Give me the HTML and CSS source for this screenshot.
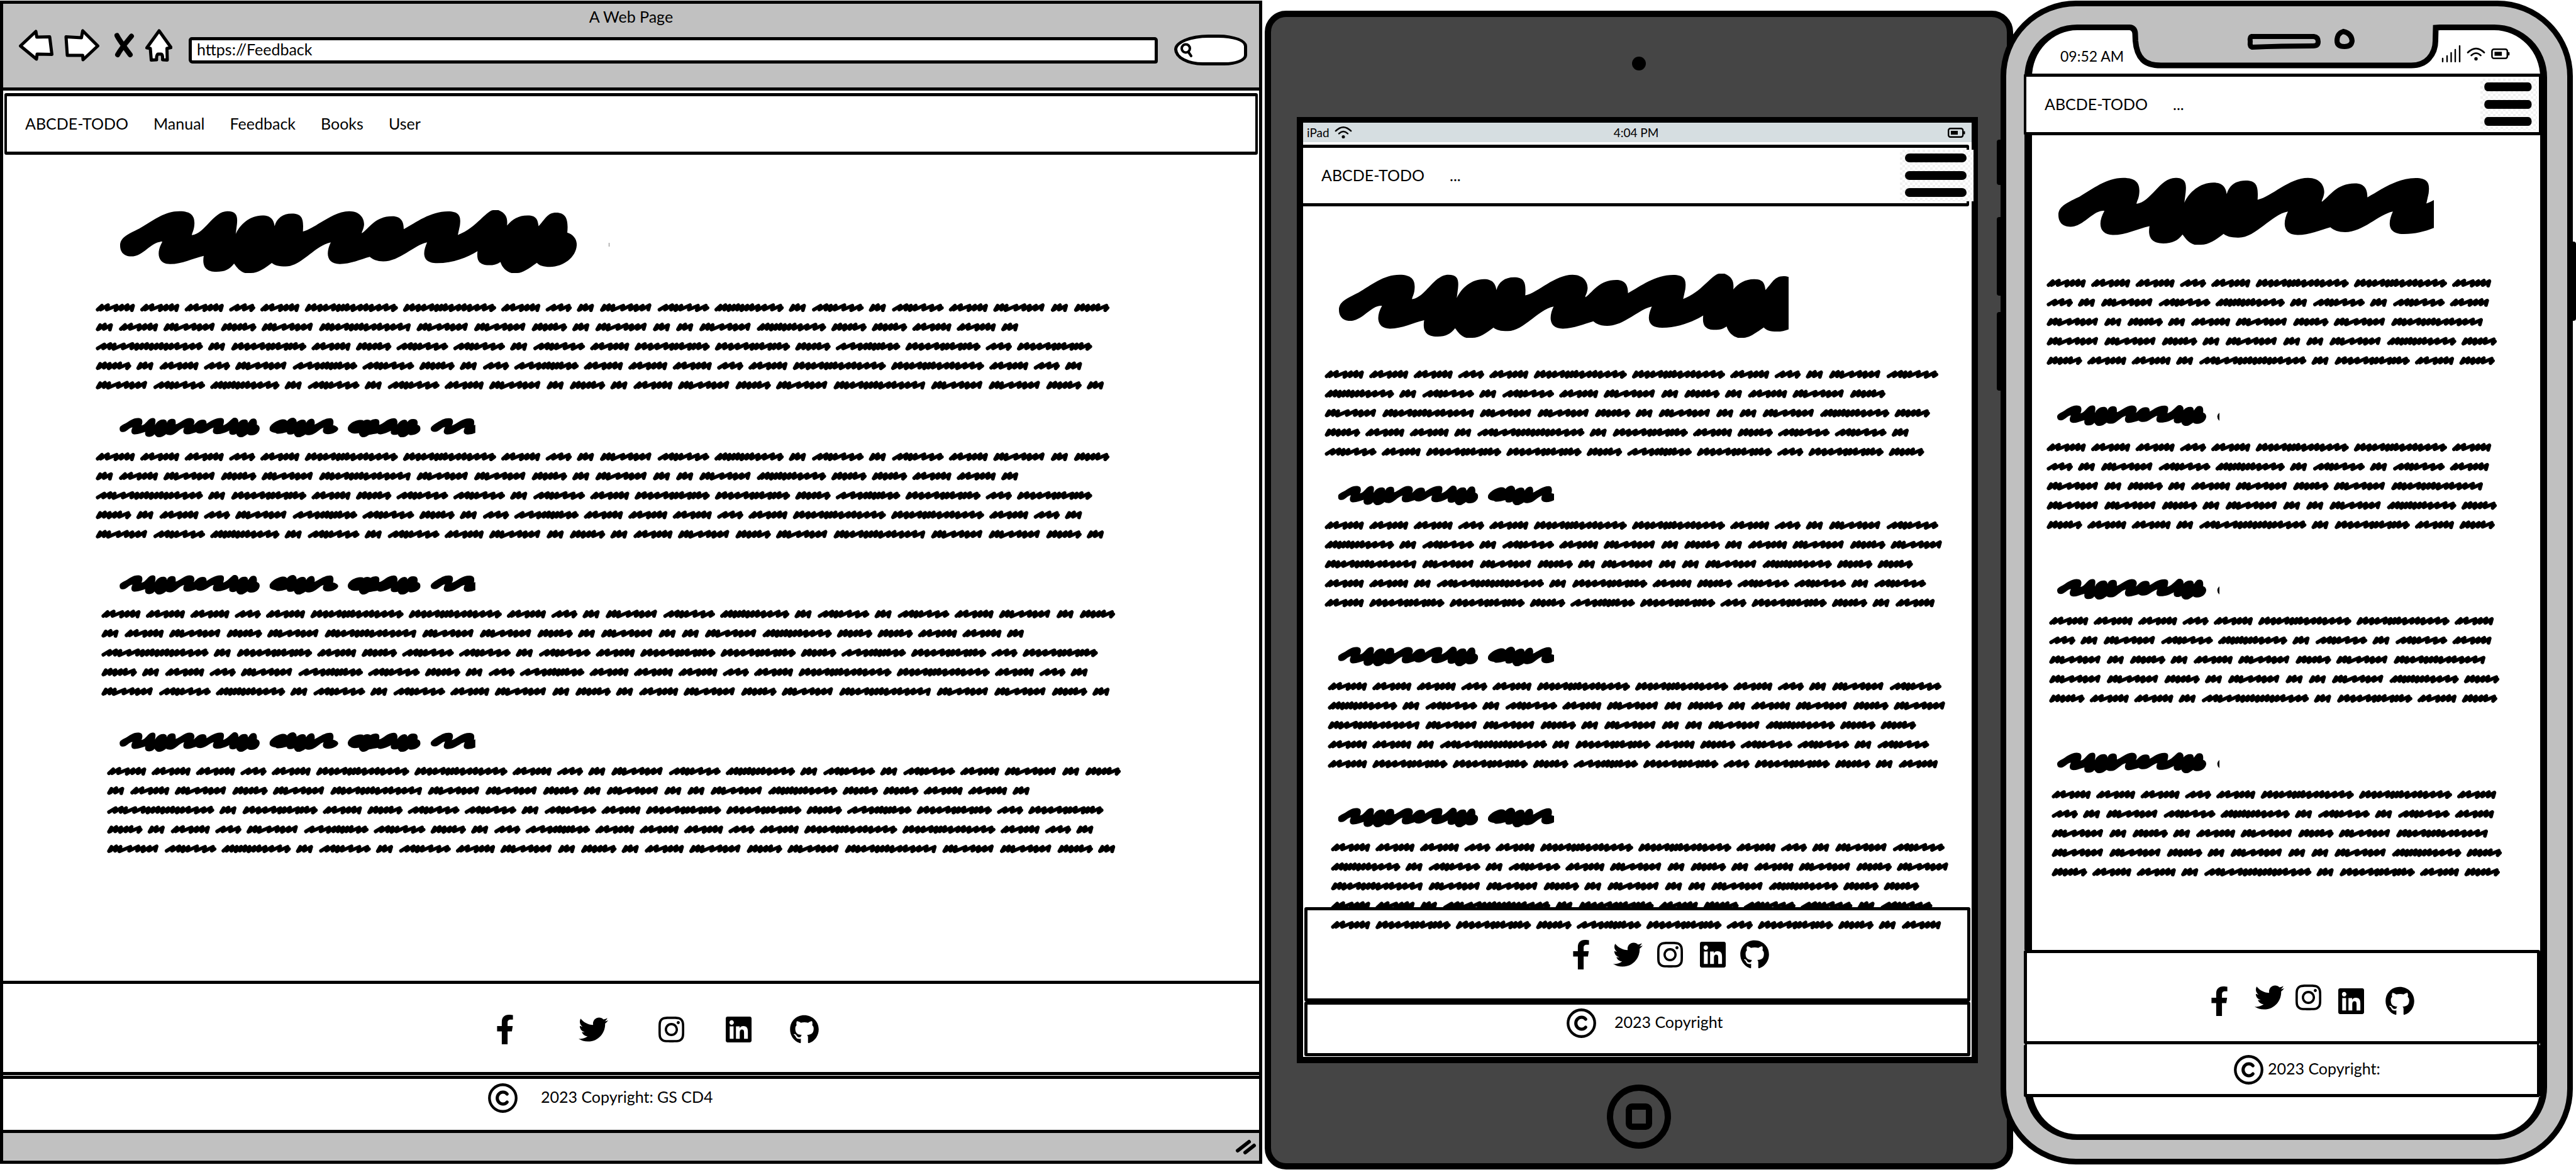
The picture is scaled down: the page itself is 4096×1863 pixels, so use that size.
FILE: index.html
```html
<!DOCTYPE html>
<html lang="en">
<head>
<meta charset="utf-8">
<title>Feedback wireframes</title>
<meta name="viewport" content="width=device-width, initial-scale=1">
<link rel="stylesheet" href="styles.css">
</head>
<body>
<svg class="defs" aria-hidden="true">
  <symbol id="big-word" viewBox="293 1030 1114 307" preserveAspectRatio="none">
    <path d="M293 1203C293 1165 310 1150 340 1120C370 1085 400 1035 438 1035C470 1035 476 1065 474 1105C473 1130 468 1142 468 1152C500 1145 520 1035 555 1035C578 1035 580 1060 578 1100L575 1147C585 1100 610 1056 640 1056C662 1056 668 1080 670 1108C675 1070 690 1047 712 1047C738 1047 741 1075 739 1134C770 1120 810 1035 852 1035C880 1035 890 1075 888 1105C886 1130 882 1135 883 1143C900 1120 915 1060 957 1060C980 1060 985 1090 985 1123C1015 1090 1050 1036 1093 1036C1125 1036 1124 1070 1122 1105L1117 1151C1160 1120 1185 1035 1203 1030L1216 1030C1235 1045 1239 1070 1237 1105C1250 1075 1265 1056 1287 1056C1310 1056 1312 1080 1314 1108C1330 1075 1335 1042 1357 1042C1382 1042 1387 1080 1384 1140C1400 1150 1408 1175 1407 1203C1405 1260 1375 1307 1342 1307C1325 1307 1315 1300 1310 1287C1290 1315 1275 1337 1262 1337L1248 1337C1235 1330 1225 1310 1221 1283C1212 1295 1205 1299 1193 1299C1165 1299 1163 1265 1165 1230C1140 1260 1105 1289 1067 1289C1030 1289 1030 1240 1042 1187C1010 1200 975 1280 935 1280C920 1280 910 1272 902 1258C880 1270 855 1293 829 1293C795 1293 795 1235 807 1187C770 1200 735 1305 697 1305C680 1305 670 1300 663 1288C645 1315 630 1337 612 1337L598 1337C585 1330 578 1310 571 1291C560 1320 548 1331 528 1331C500 1331 493 1300 497 1253C470 1265 445 1293 415 1293C385 1293 380 1240 396 1184C370 1180 350 1256 320 1256C300 1256 293 1230 293 1203Z"/>
  </symbol>
  <symbol id="word-two" viewBox="523 606 197 96" preserveAspectRatio="none">
    <path d="M523 662C523 640 545 618 560 614C568 612 572 618 573 622C578 612 585 606 591 606C598 608 601 618 601 628C605 620 612 615 618 615C625 615 628 622 628 631C632 618 638 611 644 611C651 611 654 625 652 640C665 630 680 608 697 608C708 608 707 630 705 643C715 645 720 655 720 662C718 675 705 687 690 687C677 687 673 675 678 655C665 662 655 690 637 692C632 692 628 690 626 688C620 695 612 702 608 702L602 702C597 698 594 690 593 684C590 688 585 689 582 689C575 689 573 683 573 677C565 680 555 685 548 685C543 685 542 681 540 680C530 680 523 672 523 662Z"/>
  </symbol>
  <symbol id="word-three" viewBox="746 606 210 96" preserveAspectRatio="none">
    <path d="M747 660C747 640 765 617 785 617Q791 617 792 621Q797 615 803 615Q810 615 812 620Q818 612 827 612C838 612 839 625 837 641C850 635 862 608 879 608C890 608 891 628 889 640Q897 618 910 615Q918 616 918 628Q923 612 935 612C948 612 949 628 947 641C955 645 956 655 956 662C955 680 940 692 928 692Q924 692 922 687Q912 702 905 702L898 702Q892 697 891 688C887 691 882 690 878 690Q868 688 871 670C862 678 852 685 842 688Q834 689 833 683C825 685 816 690 808 690Q800 700 794 702L788 702Q780 695 779 682C765 686 757 683 755 678Q747 672 747 660Z"/>
  </symbol>
  <symbol id="word-four" viewBox="984 606 128 96" preserveAspectRatio="none">
    <path d="M985 660C985 645 1005 628 1018 615Q1030 606 1042 609C1050 614 1050 630 1045 645C1060 635 1075 609 1095 609C1110 609 1110 625 1108 643L1112 641L1112 680Q1100 690 1089 689C1076 687 1078 670 1082 655C1070 658 1055 689 1032 689C1018 687 1022 668 1026 652C1015 655 1008 676 997 676Q986 676 985 660Z"/>
  </symbol>
  <symbol id="facebook" viewBox="22 0 276 512"><path d="M279.14 288l14.22-92.66h-88.91v-60.13c0-25.35 12.42-50.06 52.24-50.06h40.42V6.26S260.43 0 225.36 0c-73.22 0-121.08 44.38-121.08 124.72v70.62H22.89V288h81.39v224h100.17V288z"/></symbol>
  <symbol id="twitter" viewBox="0 0 512 512"><path d="M459.37 151.716c.325 4.548.325 9.097.325 13.645 0 138.72-105.583 298.558-298.558 298.558-59.452 0-114.68-17.219-161.137-47.106 8.447.974 16.568 1.299 25.34 1.299 49.055 0 94.213-16.568 130.274-44.832-46.132-.975-84.792-31.188-98.112-72.772 6.498.974 12.995 1.624 19.818 1.624 9.421 0 18.843-1.3 27.614-3.573-48.081-9.747-84.143-51.98-84.143-102.985v-1.299c13.969 7.797 30.214 12.67 47.431 13.319-28.264-18.843-46.781-51.005-46.781-87.391 0-19.492 5.197-37.36 14.294-52.954 51.655 63.675 129.3 105.258 216.365 109.807-1.624-7.797-2.599-15.918-2.599-24.04 0-57.828 46.782-104.934 104.934-104.934 30.213 0 57.502 12.67 76.67 33.137 23.715-4.548 46.456-13.32 66.599-25.34-7.798 24.366-24.366 44.833-46.132 57.827 21.117-2.273 41.584-8.122 60.426-16.243-14.292 20.791-32.161 39.308-52.628 54.253z"/></symbol>
  <symbol id="instagram" viewBox="0 0 448 512"><path d="M224.1 141c-63.6 0-114.9 51.3-114.9 114.9s51.3 114.9 114.9 114.9S339 319.5 339 255.9 287.7 141 224.1 141zm0 189.6c-41.1 0-74.7-33.5-74.7-74.7s33.5-74.7 74.7-74.7 74.7 33.5 74.7 74.7-33.6 74.7-74.7 74.7zm146.4-194.3c0 14.9-12 26.8-26.8 26.8-14.9 0-26.8-12-26.8-26.8s12-26.8 26.8-26.8 26.8 12 26.8 26.8zm76.1 27.2c-1.7-35.9-9.9-67.7-36.2-93.9-26.2-26.2-58-34.4-93.9-36.2-37-2.1-147.9-2.1-184.9 0-35.8 1.7-67.6 9.9-93.9 36.1s-34.4 58-36.2 93.9c-2.1 37-2.1 147.9 0 184.9 1.7 35.9 9.9 67.7 36.2 93.9s58 34.4 93.9 36.2c37 2.1 147.9 2.1 184.9 0 35.9-1.7 67.7-9.9 93.9-36.2 26.2-26.2 34.4-58 36.2-93.9 2.1-37 2.1-147.8 0-184.8zM398.8 388c-7.8 19.6-22.9 34.7-42.6 42.6-29.5 11.7-99.5 9-132.1 9s-102.7 2.6-132.1-9c-19.6-7.8-34.7-22.9-42.6-42.6-11.7-29.5-9-99.5-9-132.1s-2.6-102.7 9-132.1c7.8-19.6 22.9-34.7 42.6-42.6 29.5-11.7 99.5-9 132.1-9s102.7-2.6 132.1 9c19.6 7.8 34.7 22.9 42.6 42.6 11.7 29.5 9 99.5 9 132.1s2.7 102.7-9 132.1z"/></symbol>
  <symbol id="linkedin" viewBox="0 0 448 512"><path d="M416 32H31.9C14.3 32 0 46.5 0 64.3v383.4C0 465.5 14.3 480 31.9 480H416c17.6 0 32-14.5 32-32.3V64.3c0-17.8-14.4-32.3-32-32.3zM135.4 416H69V202.2h66.5V416zm-33.2-243c-21.3 0-38.5-17.3-38.5-38.5S80.9 96 102.2 96c21.2 0 38.5 17.3 38.5 38.5 0 21.3-17.2 38.5-38.5 38.5zm282.1 243h-66.4V312c0-24.8-.5-56.7-34.5-56.7-34.6 0-39.9 27-39.9 54.9V416h-66.4V202.2h63.7v29.2h.9c8.9-16.8 30.6-34.5 62.9-34.5 67.2 0 79.7 44.3 79.7 101.9V416z"/></symbol>
  <symbol id="github" viewBox="0 0 496 512"><path d="M244.8 8C106.1 8 0 113.3 0 252c0 110.9 69.8 205.8 169.5 239.2 12.8 2.3 17.3-5.6 17.3-12.1 0-6.2-.3-40.4-.3-61.4 0 0-70 15-84.7-29.8 0 0-11.4-29.1-27.8-36.6 0 0-22.9-15.7 1.6-15.4 0 0 24.9 2 38.6 25.8 21.9 38.6 58.6 27.5 72.9 20.9 2.3-16 8.8-27.1 16-33.7-55.9-6.2-112.3-14.3-112.3-110.5 0-27.5 7.6-41.3 23.6-58.9-2.6-6.5-11.1-33.3 2.6-67.9 20.9-6.5 69 27 69 27 20-5.6 41.5-8.5 62.8-8.5s42.8 2.9 62.8 8.5c0 0 48.1-33.6 69-27 13.7 34.7 5.2 61.4 2.6 67.9 16 17.7 25.8 31.5 25.8 58.9 0 96.5-58.9 104.2-114.8 110.5 9.2 7.9 17 22.9 17 46.4 0 33.7-.3 75.4-.3 83.6 0 6.5 4.6 14.4 17.3 12.1C428.2 457.8 496 362.9 496 252 496 113.3 383.5 8 244.8 8z"/></symbol>
  <symbol id="copyright" viewBox="0 0 48 48"><g fill="none" stroke="#000" stroke-linecap="round"><circle cx="24" cy="24" r="21.7" stroke-width="4.4"/><path d="M31 17.5A9.2 9.7 0 1 0 31 30.5" stroke-width="5.2"/></g></symbol>
  <symbol id="wifi" viewBox="0 0 30 22"><g fill="none" stroke="#000" stroke-width="2.6" stroke-linecap="round"><path d="M2 8.500Q15-4.500 28 8.500"/><path d="M7.500 13Q15 6 22.500 13"/></g><circle cx="15" cy="18.500" r="2.700"/></symbol>
  <symbol id="battery" viewBox="0 0 28 16"><rect x="1.200" y="1.200" width="23" height="13.600" rx="3" fill="none" stroke="#000" stroke-width="2.400"/><rect x="5" y="5" width="11" height="6"/><rect x="25" y="5.500" width="2.500" height="5" rx="1"/></symbol>
  <symbol id="menu" viewBox="0 0 117 82" preserveAspectRatio="none"><rect x="8" y="6" width="98" height="14" rx="7"/><rect x="8" y="34" width="98" height="14" rx="7"/><rect x="8" y="61" width="98" height="14" rx="7"/></symbol>
</svg>

<div class="stage">

  <section class="browser" aria-label="Desktop">
    <header class="chrome">
      <p class="chrome__title">A Web Page</p>
      <div class="toolbar">
        <div class="toolbar__buttons">
          <button type="button" aria-label="Back"><svg width="55" height="50" viewBox="0 0 55 50"><path d="M2.500 26L27 3L28.500 12L49 11.500L52.500 39.500L29 39L28 47Z" class="tool"/></svg></button>
          <button type="button" aria-label="Forward"><svg width="56" height="52" viewBox="0 0 56 52"><path d="M53.500 27L29.500 3L27.500 14L3 12.500L5 42L29.500 42L30 49Z" class="tool"/></svg></button>
          <button type="button" aria-label="Stop"><svg width="39" height="40" viewBox="0 0 39 40"><path d="M11 4.500C14 11 20 19 32 35M34 5.500C27 14 18 24 12 35" fill="none" stroke="#000" stroke-width="8" stroke-linecap="round"/></svg></button>
          <button type="button" aria-label="Home"><svg width="43" height="52" viewBox="0 0 43 52"><path d="M22 3L41 29.500L34.500 31L35 49.500L27.500 49Q28 40 25 40L20 40Q17.500 42 18 49L9.500 49.500L8 31L2.500 30Z" class="tool"/></svg></button>
        </div>
        <div class="toolbar__fields">
          <input class="url" type="text" aria-label="Address" value="https://Feedback">
          <label class="search">
            <svg width="20" height="24" viewBox="0 0 20 24" aria-hidden="true"><circle cx="8.500" cy="9" r="6.500" fill="none" stroke="#000" stroke-width="4"/><path d="M12.500 14.500L17 21" stroke="#000" stroke-width="4" stroke-linecap="round"/></svg>
            <input type="search" aria-label="Search">
          </label>
        </div>
      </div>
    </header>

    <nav class="navbar">
      <a href="#">ABCDE-TODO</a>
      <a href="#">Manual</a>
      <a href="#">Feedback</a>
      <a href="#">Books</a>
      <a href="#">User</a>
    </nav>

    <main class="page">
      <svg class="headline" viewBox="0 0 820 100" role="img" aria-label="Headline"><use href="#big-word" width="726" height="100"/><rect x="777" y="52" width="1" height="6" opacity=".5"/></svg>
      <svg class="copy copy--first" viewBox="0 0 1660 142" data-lines="AAABACCABDEFGDFDFAEDH DAEHEIEEHDEDDEGHHAAD JDKAHFFDFAKKHLKBK HDABELFHDBLAAABACCABD EFGDFDFAEDHDAEHEIEEHD" role="img" aria-label="Paragraph"></svg>
      <section class="block">
        <svg class="subhead" viewBox="0 0 584 32" role="img" aria-label="Subheading"><use href="#big-word" width="230" height="32"/><use href="#word-two" x="246" width="113" height="32"/><use href="#word-three" x="374" width="120" height="32"/><use href="#word-four" x="510" width="74" height="32"/></svg>
        <svg class="copy" viewBox="0 0 1660 142" data-lines="AAABACCABDEFGDFDFAEDH DAEHEIEEHDEDDEGHHAAD JDKAHFFDFAKKHLKBK HDABELFHDBLAAABACCABD EFGDFDFAEDHDAEHEIEEHD" role="img" aria-label="Paragraph"></svg>
      </section>
      <section class="block">
        <svg class="subhead" viewBox="0 0 584 32" role="img" aria-label="Subheading"><use href="#big-word" width="230" height="32"/><use href="#word-two" x="246" width="113" height="32"/><use href="#word-three" x="374" width="120" height="32"/><use href="#word-four" x="510" width="74" height="32"/></svg>
        <svg class="copy copy--in" viewBox="0 0 1660 142" data-lines="AAABACCABDEFGDFDFAEDH DAEHEIEEHDEDDEGHHAAD JDKAHFFDFAKKHLKBK HDABELFHDBLAAABACCABD EFGDFDFAEDHDAEHEIEEHD" role="img" aria-label="Paragraph"></svg>
      </section>
      <section class="block">
        <svg class="subhead" viewBox="0 0 584 32" role="img" aria-label="Subheading"><use href="#big-word" width="230" height="32"/><use href="#word-two" x="246" width="113" height="32"/><use href="#word-three" x="374" width="120" height="32"/><use href="#word-four" x="510" width="74" height="32"/></svg>
        <svg class="copy copy--in-more" viewBox="0 0 1660 142" data-lines="AAABACCABDEFGDFDFAEDH DAEHEIEEHDEDDEGHHAAD JDKAHFFDFAKKHLKBK HDABELFHDBLAAABACCABD EFGDFDFAEDHDAEHEIEEHD" role="img" aria-label="Paragraph"></svg>
      </section>
    </main>

    <footer class="footer">
      <div class="socials">
        <a href="#" aria-label="Facebook"><svg><use href="#facebook"/></svg></a>
        <a href="#" aria-label="Twitter"><svg><use href="#twitter"/></svg></a>
        <a href="#" aria-label="Instagram"><svg><use href="#instagram"/></svg></a>
        <a href="#" aria-label="LinkedIn"><svg><use href="#linkedin"/></svg></a>
        <a href="#" aria-label="GitHub"><svg><use href="#github"/></svg></a>
      </div>
      <p class="legal"><svg aria-hidden="true"><use href="#copyright"/></svg><span>2023 Copyright: GS CD4</span></p>
    </footer>
    <div class="statusbar"><svg width="34" height="30" viewBox="0 0 34 30" aria-hidden="true"><path d="M4 21L22 7M16 24L30 13" stroke="#000" stroke-width="6" stroke-linecap="round"/></svg></div>
  </section>

  <section class="tablet" aria-label="Tablet">
    <div class="tablet__bezel"><span class="tablet__camera"></span></div>
    <div class="tablet__screen">
      <div class="tablet__status">
        <span class="tablet__carrier">iPad <svg width="28" height="21"><use href="#wifi"/></svg></span>
        <span>4:04 PM</span>
        <svg class="tablet__battery" width="28" height="16" aria-label="Battery"><use href="#battery"/></svg>
      </div>
      <nav class="navbar">
        <a href="#">ABCDE-TODO</a>
        <span>...</span>
        <button class="menu" type="button" aria-label="Menu"><svg><use href="#menu"/></svg></button>
      </nav>
      <main class="page">
        <svg class="headline" viewBox="0 0 715 102" role="img" aria-label="Headline"><use href="#big-word" width="740" height="102"/></svg>
        <svg class="copy copy--first" viewBox="0 0 1030 142" data-lines="AAABACCABDEF GDFDFAEDHDAEH EIEEHDEDDEGH HAADJDKAHFFD FAKKHLKBKH" role="img" aria-label="Paragraph"></svg>
        <section class="block">
          <svg class="subhead" viewBox="0 0 354 32" role="img" aria-label="Subheading"><use href="#big-word" width="230" height="32"/><use href="#word-two" x="246" width="113" height="32"/></svg>
          <svg class="copy" viewBox="0 0 1030 142" data-lines="AAABACCABDEF GDFDFAEDHDAEHE IEEHDEDDEGHH AADJDKAHFFDF AKKHLKBKHDA" role="img" aria-label="Paragraph"></svg>
        </section>
        <section class="block">
          <svg class="subhead" viewBox="0 0 354 32" role="img" aria-label="Subheading"><use href="#big-word" width="230" height="32"/><use href="#word-two" x="246" width="113" height="32"/></svg>
          <svg class="copy copy--in" viewBox="0 0 1030 142" data-lines="AAABACCABDEF GDFDFAEDHDAEHE IEEHDEDDEGHH AADJDKAHFFDF AKKHLKBKHDA" role="img" aria-label="Paragraph"></svg>
        </section>
        <section class="block">
          <svg class="subhead" viewBox="0 0 354 32" role="img" aria-label="Subheading"><use href="#big-word" width="230" height="32"/><use href="#word-two" x="246" width="113" height="32"/></svg>
          <svg class="copy copy--in-more" viewBox="0 0 1030 142" data-lines="AAABACCABDEF GDFDFAEDHDAEHE IEEHDEDDEGHH AADJDKAHFFDF AKKHLKBKHDA" role="img" aria-label="Paragraph"></svg>
        </section>
      </main>
      <footer class="footer">
        <div class="socials">
          <a href="#" aria-label="Facebook"><svg><use href="#facebook"/></svg></a>
          <a href="#" aria-label="Twitter"><svg><use href="#twitter"/></svg></a>
          <a href="#" aria-label="Instagram"><svg><use href="#instagram"/></svg></a>
          <a href="#" aria-label="LinkedIn"><svg><use href="#linkedin"/></svg></a>
          <a href="#" aria-label="GitHub"><svg><use href="#github"/></svg></a>
        </div>
        <p class="legal"><svg aria-hidden="true"><use href="#copyright"/></svg><span>2023 Copyright</span></p>
      </footer>
    </div>
    <div class="tablet__bezel tablet__bezel--bottom"><button class="home" type="button" aria-label="Home"><span></span></button></div>
  </section>

  <section class="phone" aria-label="Phone">
    <span class="key key--mute"></span>
    <span class="key key--up"></span>
    <span class="key key--down"></span>
    <span class="key key--power"></span>
    <svg class="notch" width="493" height="71" viewBox="0 0 493 71" aria-hidden="true">
      <path d="M0 0H493V5Q486 3 486 10L486 28Q487 46 478 54Q466 65 448 65L50 65Q30 65 22 55Q9 44 9 26L8 14Q8 4 0 5Z" fill="#c0c0c0"/>
      <path d="M-2 4.500Q8 4 9 14L9.500 26Q11 46 21 56Q30 65 50 65L448 65Q466 65 476 54Q487 42 486.500 24L487 5L495 4.500" fill="none" stroke="#000" stroke-width="9"/>
      <path d="M194 19H293Q300 20 300 27Q300 34 292 34Q240 34 195 36Q191 35 192 27Q191 20 194 19Z" fill="none" stroke="#000" stroke-width="8"/>
      <path d="M340 11Q353 14 354 26Q353 35 342 35Q330 35 330 26Q330 14 340 11Z" fill="none" stroke="#000" stroke-width="8"/>
    </svg>
    <div class="phone__screen">
      <div class="phone__status">
        <span>09:52 AM</span>
        <span class="phone__signals">
          <svg width="31" height="27" viewBox="0 0 31 27" aria-label="Signal"><path d="M2 21V26M9 17V26M15.500 12V26M22 7V26M29 1V26" stroke="#000" stroke-width="2.400" stroke-linecap="round"/></svg>
          <svg width="30" height="22" aria-label="Wi-Fi"><use href="#wifi"/></svg>
          <svg width="30" height="17" aria-label="Battery"><use href="#battery"/></svg>
        </span>
      </div>
      <nav class="navbar">
        <a href="#">ABCDE-TODO</a>
        <span>...</span>
        <button class="menu" type="button" aria-label="Menu"><svg><use href="#menu"/></svg></button>
      </nav>
      <main class="page">
        <svg class="headline" viewBox="0 0 597 108" role="img" aria-label="Headline"><use href="#big-word" width="791" height="108"/></svg>
        <svg class="copy copy--first" viewBox="0 0 740 142" data-lines="AAABACCA BDEFGDFDFA EDHDAEHEI EEHDEDDEGH HAADJDKAH" role="img" aria-label="Paragraph"></svg>
        <section class="block">
          <svg class="subhead" viewBox="0 0 258 33" role="img" aria-label="Subheading"><use href="#big-word" width="237" height="33"/><path d="M258 12Q251 18 258 25Z"/></svg>
          <svg class="copy" viewBox="0 0 740 142" data-lines="AAABACCA BDEFGDFDFA EDHDAEHEI EEHDEDDEGH HAADJDKAH" role="img" aria-label="Paragraph"></svg>
        </section>
        <section class="block">
          <svg class="subhead" viewBox="0 0 258 33" role="img" aria-label="Subheading"><use href="#big-word" width="237" height="33"/><path d="M258 12Q251 18 258 25Z"/></svg>
          <svg class="copy copy--in" viewBox="0 0 740 142" data-lines="AAABACCA BDEFGDFDFA EDHDAEHEI EEHDEDDEGH HAADJDKAH" role="img" aria-label="Paragraph"></svg>
        </section>
        <section class="block">
          <svg class="subhead" viewBox="0 0 258 33" role="img" aria-label="Subheading"><use href="#big-word" width="237" height="33"/><path d="M258 12Q251 18 258 25Z"/></svg>
          <svg class="copy copy--in-more" viewBox="0 0 740 142" data-lines="AAABACCA BDEFGDFDFA EDHDAEHEI EEHDEDDEGH HAADJDKAH" role="img" aria-label="Paragraph"></svg>
        </section>
      </main>
      <footer class="footer">
        <div class="socials">
          <a href="#" aria-label="Facebook"><svg><use href="#facebook"/></svg></a>
          <a class="raised" href="#" aria-label="Twitter"><svg><use href="#twitter"/></svg></a>
          <a class="raised" href="#" aria-label="Instagram"><svg><use href="#instagram"/></svg></a>
          <a href="#" aria-label="LinkedIn"><svg><use href="#linkedin"/></svg></a>
          <a href="#" aria-label="GitHub"><svg><use href="#github"/></svg></a>
        </div>
        <p class="legal"><svg aria-hidden="true"><use href="#copyright"/></svg><span>2023 Copyright:</span></p>
      </footer>
    </div>
  </section>

</div>
<script src="scribble.js"></script>
</body>
</html>
```
FILE: styles.css
```css
* { box-sizing: border-box; }

body {
  margin: 0;
  background: #fff;
  color: #000;
  font-family: Lato, "Liberation Sans", sans-serif;
  font-size: 25px;
  line-height: 30px;
}

p { margin: 0; }
a { color: inherit; text-decoration: none; }
svg { display: block; }
button { padding: 0; border: 0; background: none; }

.defs { position: absolute; width: 0; height: 0; }

.stage {
  display: grid;
  grid-template-columns: minmax(0, 2007fr) minmax(0, 1194fr) minmax(0, 890fr);
  min-height: 100vh;
  padding-right: 5px;
}

/* shared page parts */
.navbar {
  display: flex;
  align-items: center;
  flex: none;
  gap: 40px;
  height: 98px;
  padding-left: 29px;
  border: 5px solid #000;
  border-width: 5px 4px;
  border-radius: 3px;
  background: #fff;
}
.navbar a, .navbar span { padding-bottom: 3px; }

.page {
  display: flex;
  flex: 1;
  flex-direction: column;
}

.headline, .subhead, .copy { flex: none; max-width: 100%; }
.copy {
  height: 138px;
  fill: none;
  stroke: #000;
  stroke-width: 6;
  stroke-linecap: round;
  stroke-linejoin: round;
}
.copy--in { margin-left: var(--step); }
.copy--in-more { margin-left: calc(var(--step) * 2); }

.block {
  display: flex;
  flex-direction: column;
  flex: none;
  gap: var(--block-gap);
}
.block + .block { margin-top: var(--block-space); }

.footer { flex: none; }
.socials {
  display: grid;
  height: 150px;
  padding-top: 47px;
  border: 5px solid #000;
  border-radius: 3px;
}
.socials svg { width: 47px; height: 47px; }
.socials a { display: block; height: 47px; }
.socials [aria-label="Facebook"] svg { width: 26px; }
.socials [aria-label="Instagram"] svg,
.socials [aria-label="LinkedIn"] svg { width: 41px; }
.socials [aria-label="GitHub"] svg { width: 46px; }

.legal {
  display: flex;
  align-items: flex-start;
  border: 5px solid #000;
  border-radius: 3px;
  line-height: 42px;
}
.legal svg { width: 47px; height: 47px; }

.menu {
  margin-left: auto;
  background: repeating-conic-gradient(#f1f1f1 0 25%, #fff 0 50%) 0 0 / 8px 8px;
}
.menu svg { width: 100%; height: 100%; }

/* desktop browser */
.browser {
  --step: 9px;
  --block-gap: 24px;
  --block-space: 57px;
  display: flex;
  flex-direction: column;
  min-width: 0;
  margin: 1px 0 13px;
  border: 5px solid #000;
}
.chrome {
  height: 138px;
  border-bottom: 5px solid #000;
  background: #c1c1c1;
}
.chrome__title { line-height: 40px; text-align: center; }
.toolbar {
  display: flex;
  align-items: flex-start;
  gap: 26px;
  padding: 0 19px 0 25px;
}
.toolbar__buttons {
  display: flex;
  align-items: center;
  gap: 17px;
}
.tool {
  fill: #fff;
  stroke: #000;
  stroke-width: 5;
  stroke-linejoin: round;
}
.toolbar__fields {
  display: flex;
  flex: 1;
  align-items: center;
  gap: 26px;
  padding-top: 9px;
}
.url {
  flex: 1;
  min-width: 0;
  height: 42px;
  padding: 0 0 4px 8px;
  border: 5px solid #000;
  border-radius: 5px 5px 4px 6px;
  background: #fff;
  color: inherit;
  font: inherit;
}
.search {
  display: flex;
  align-items: center;
  width: 116px;
  height: 49px;
  padding: 0 10px 0 5px;
  border: 5px solid #000;
  border-radius: 60px 50px 40px 50px / 26px 20px 18px 28px;
  background: #fff;
}
.search svg { flex: none; }
.search input {
  flex: 1;
  min-width: 0;
  border: 0;
  background: none;
  font: inherit;
}
.browser .navbar { margin: 4px 2px 0; }
.browser .page { padding: 88px 0 0 147px; }
.browser .headline { width: 820px; height: 100px; margin-left: 39px; }
.browser .copy { width: 1614px; }
.browser .copy--first { margin: 48px 0 44px; }
.browser .subhead { width: 568px; height: 31px; margin-left: 37px; }
.browser .socials {
  grid-template-columns: 130px 127px 107px 102px auto;
  padding: 49px 0 0 785px;
  border-width: 5px 0;
  border-radius: 0;
}
.browser .legal {
  gap: 37px;
  height: 91px;
  margin-top: 1px;
  padding: 7px 0 0 771px;
  border-width: 5px 0;
  border-radius: 0;
}
.statusbar {
  display: flex;
  flex: none;
  align-items: center;
  justify-content: flex-end;
  height: 44px;
  padding-right: 4px;
  background: #c1c1c1;
}

/* tablet */
.tablet {
  --step: 5px;
  --block-gap: 25px;
  --block-space: 62px;
  display: flex;
  flex-direction: column;
  min-width: 0;
  margin: 17px 0 4px 4px;
  padding: 0 46px 0 41px;
  border: 10px solid #000;
  border-radius: 34px;
  background: #454545;
}
.tablet__bezel {
  display: flex;
  flex: none;
  justify-content: center;
  height: 159px;
  padding: 63px 0 0 5px;
}
.tablet__bezel--bottom { padding-top: 34px; }
.tablet__camera {
  width: 22px;
  height: 22px;
  border-radius: 50%;
  background: #000;
}
.home {
  display: grid;
  place-items: center;
  width: 102px;
  height: 102px;
  border: 10px solid #000;
  border-radius: 50%;
}
.home span {
  width: 42px;
  height: 42px;
  border: 10px solid #000;
  border-radius: 10px;
}
.tablet__screen {
  display: flex;
  flex: 1;
  flex-direction: column;
  border: 10px solid #000;
  border-top-width: 9px;
  background: #fff;
}
.tablet__status {
  display: grid;
  grid-template-columns: 1fr auto 1fr;
  align-items: center;
  flex: none;
  height: 31px;
  padding: 0 10px 0 6px;
  background: #d6dee1;
  font-size: 19px;
}
.tablet__carrier { display: flex; align-items: center; gap: 8px; }
.tablet__battery { justify-self: end; }
.tablet .navbar { margin: 4px 4px 0 -4px; }
.tablet .menu {
  width: 117px;
  height: 82px;
  margin-right: -11px;
}
.tablet .page { padding: 107px 0 0 34px; }
/* the last paragraph runs on under the footer's frame */
.tablet .block:last-child { margin-bottom: -60px; }
.tablet .headline { width: 715px; height: 102px; margin-left: 23px; }
.tablet .copy { width: 1002px; }
.tablet .copy--first { margin: 51px 0 46px; }
.tablet .subhead { width: 344px; height: 31px; margin-left: 21px; }
.tablet .footer { margin: 0 2px 1px; }
.tablet .socials {
  grid-template-columns: 64px 70px 68px 64px auto;
  padding-left: 422px;
}
.tablet .legal {
  gap: 29px;
  height: 87px;
  padding: 6px 0 0 412px;
}

/* phone */
.phone {
  --step: 4px;
  --block-gap: 27px;
  --block-space: 78px;
  position: relative;
  display: flex;
  min-width: 0;
  margin: 1px 0 12px -20px;
  padding: 29px 32px 30px 29px;
  border: 9px solid #000;
  border-radius: 120px;
  background: #c0c0c0;
}
.key {
  position: absolute;
  left: -15px;
  width: 10px;
  border-radius: 4px;
  background: #000;
}
.key--mute { top: 212px; height: 72px; }
.key--up { top: 335px; height: 125px; }
.key--down { top: 486px; height: 125px; }
.key--power { right: -14px; left: auto; top: 374px; height: 126px; }
.notch {
  position: absolute;
  top: 29px;
  left: 50%;
  margin-left: -250px;
}
.phone__screen {
  display: flex;
  flex: 1;
  flex-direction: column;
  min-width: 0;
  border: 9px solid #000;
  border-width: 9px 11px 9px 12px;
  border-radius: 84px;
  background: #fff;
}
.phone__status {
  display: flex;
  align-items: center;
  justify-content: space-between;
  flex: none;
  height: 69px;
  padding: 12px 48px 0 45px;
  font-size: 23px;
}
.phone__signals {
  display: flex;
  align-items: center;
  gap: 9px;
  padding-bottom: 6px;
}
.phone .navbar { margin: 0 -2px 0 -13px; }
.phone .menu {
  width: 90px;
  height: 82px;
  margin-right: 3px;
}
.phone .page { padding: 66px 0 0 23px; }
.phone .headline { width: 597px; height: 108px; margin-left: 19px; }
.phone .copy { width: 720px; }
.phone .copy--first { margin: 54px 0 63px; }
.phone .subhead { width: 258px; height: 33px; margin-left: 17px; }
.phone .footer {
  margin: 0 0 59px -13px;
  background: #fff;
}
.phone .socials {
  grid-template-columns: 69px 65px 68px 75px auto;
  grid-template-rows: 53px;
  align-items: end;
  padding-left: 293px;
}
.phone .raised { align-self: start; }
.phone .legal {
  gap: 7px;
  height: 84px;
  padding: 17px 0 0 329px;
  border-top: 0;
}
```
FILE: scribble.js
```js
// Placeholder words: advance width, left start height, stroke peaks, trailing hook.
const WORDS = {
  A: { adv: 72.7, start: 10.5, peaks: [10, 20, 34, 43, 52, 61], hook: false },
  B: { adv: 51.1, start: 10.5, peaks: [14, 26, 38], hook: true },
  C: { adv: 160.7, start: 11, peaks: [7, 16, 26, 35, 48, 56, 63, 70, 80, 92, 101, 110, 122, 134, 146], hook: true },
  D: { adv: 37.9, start: 11, peaks: [7, 15, 25], hook: false },
  E: { adv: 94.2, start: 11, peaks: [7, 15, 22, 38, 51, 60, 70, 81], hook: false },
  F: { adv: 93, start: 10.5, peaks: [14, 24, 31, 39, 53, 66, 79], hook: true },
  G: { adv: 121.7, start: 10.5, peaks: [10, 18, 25, 32, 39, 46, 54, 62, 72, 83, 96, 108], hook: true },
  H: { adv: 66.3, start: 11, peaks: [7, 15, 23, 32, 40, 53], hook: true },
  I: { adv: 159.5, start: 11, peaks: [7, 15, 22, 32, 46, 54, 62, 70, 78, 91, 100, 112, 122, 134, 147], hook: false },
  J: { adv: 183.6, start: 10.5, peaks: [14, 24, 31, 46, 60, 68, 76, 84, 92, 100, 108, 116, 124, 134, 147, 159, 170], hook: true },
  K: { adv: 131.4, start: 11, peaks: [7, 17, 27, 38, 52, 62, 69, 78, 91, 98, 106, 117], hook: true },
  L: { adv: 114, start: 10.5, peaks: [14, 29, 41, 50, 57, 64, 71, 78, 90, 100], hook: true }
};
const LINE = 31.7;
const GAP = 8.4;

function wordPath(word, x, y) {
  const points = [[3, word.start]];
  word.peaks.forEach((peak, i) => {
    points.push([peak, i % 3 === 1 ? 3.2 : 4]);
    points.push([peak - 2, i % 3 === 2 ? 11.4 : 10.4]);
  });
  if (word.hook) points.push([word.adv - GAP - 3, 7.5]);
  return "M" + points.map(([px, py]) => (x + px).toFixed(1) + " " + (y + py).toFixed(1)).join("L");
}

document.querySelectorAll("svg[data-lines]").forEach((svg) => {
  let d = "";
  svg.dataset.lines.split(" ").forEach((line, row) => {
    let x = 0;
    for (const key of line) {
      d += wordPath(WORDS[key], x, row * LINE);
      x += WORDS[key].adv;
    }
  });
  const path = document.createElementNS("http://www.w3.org/2000/svg", "path");
  path.setAttribute("d", d);
  svg.append(path);
});
```
